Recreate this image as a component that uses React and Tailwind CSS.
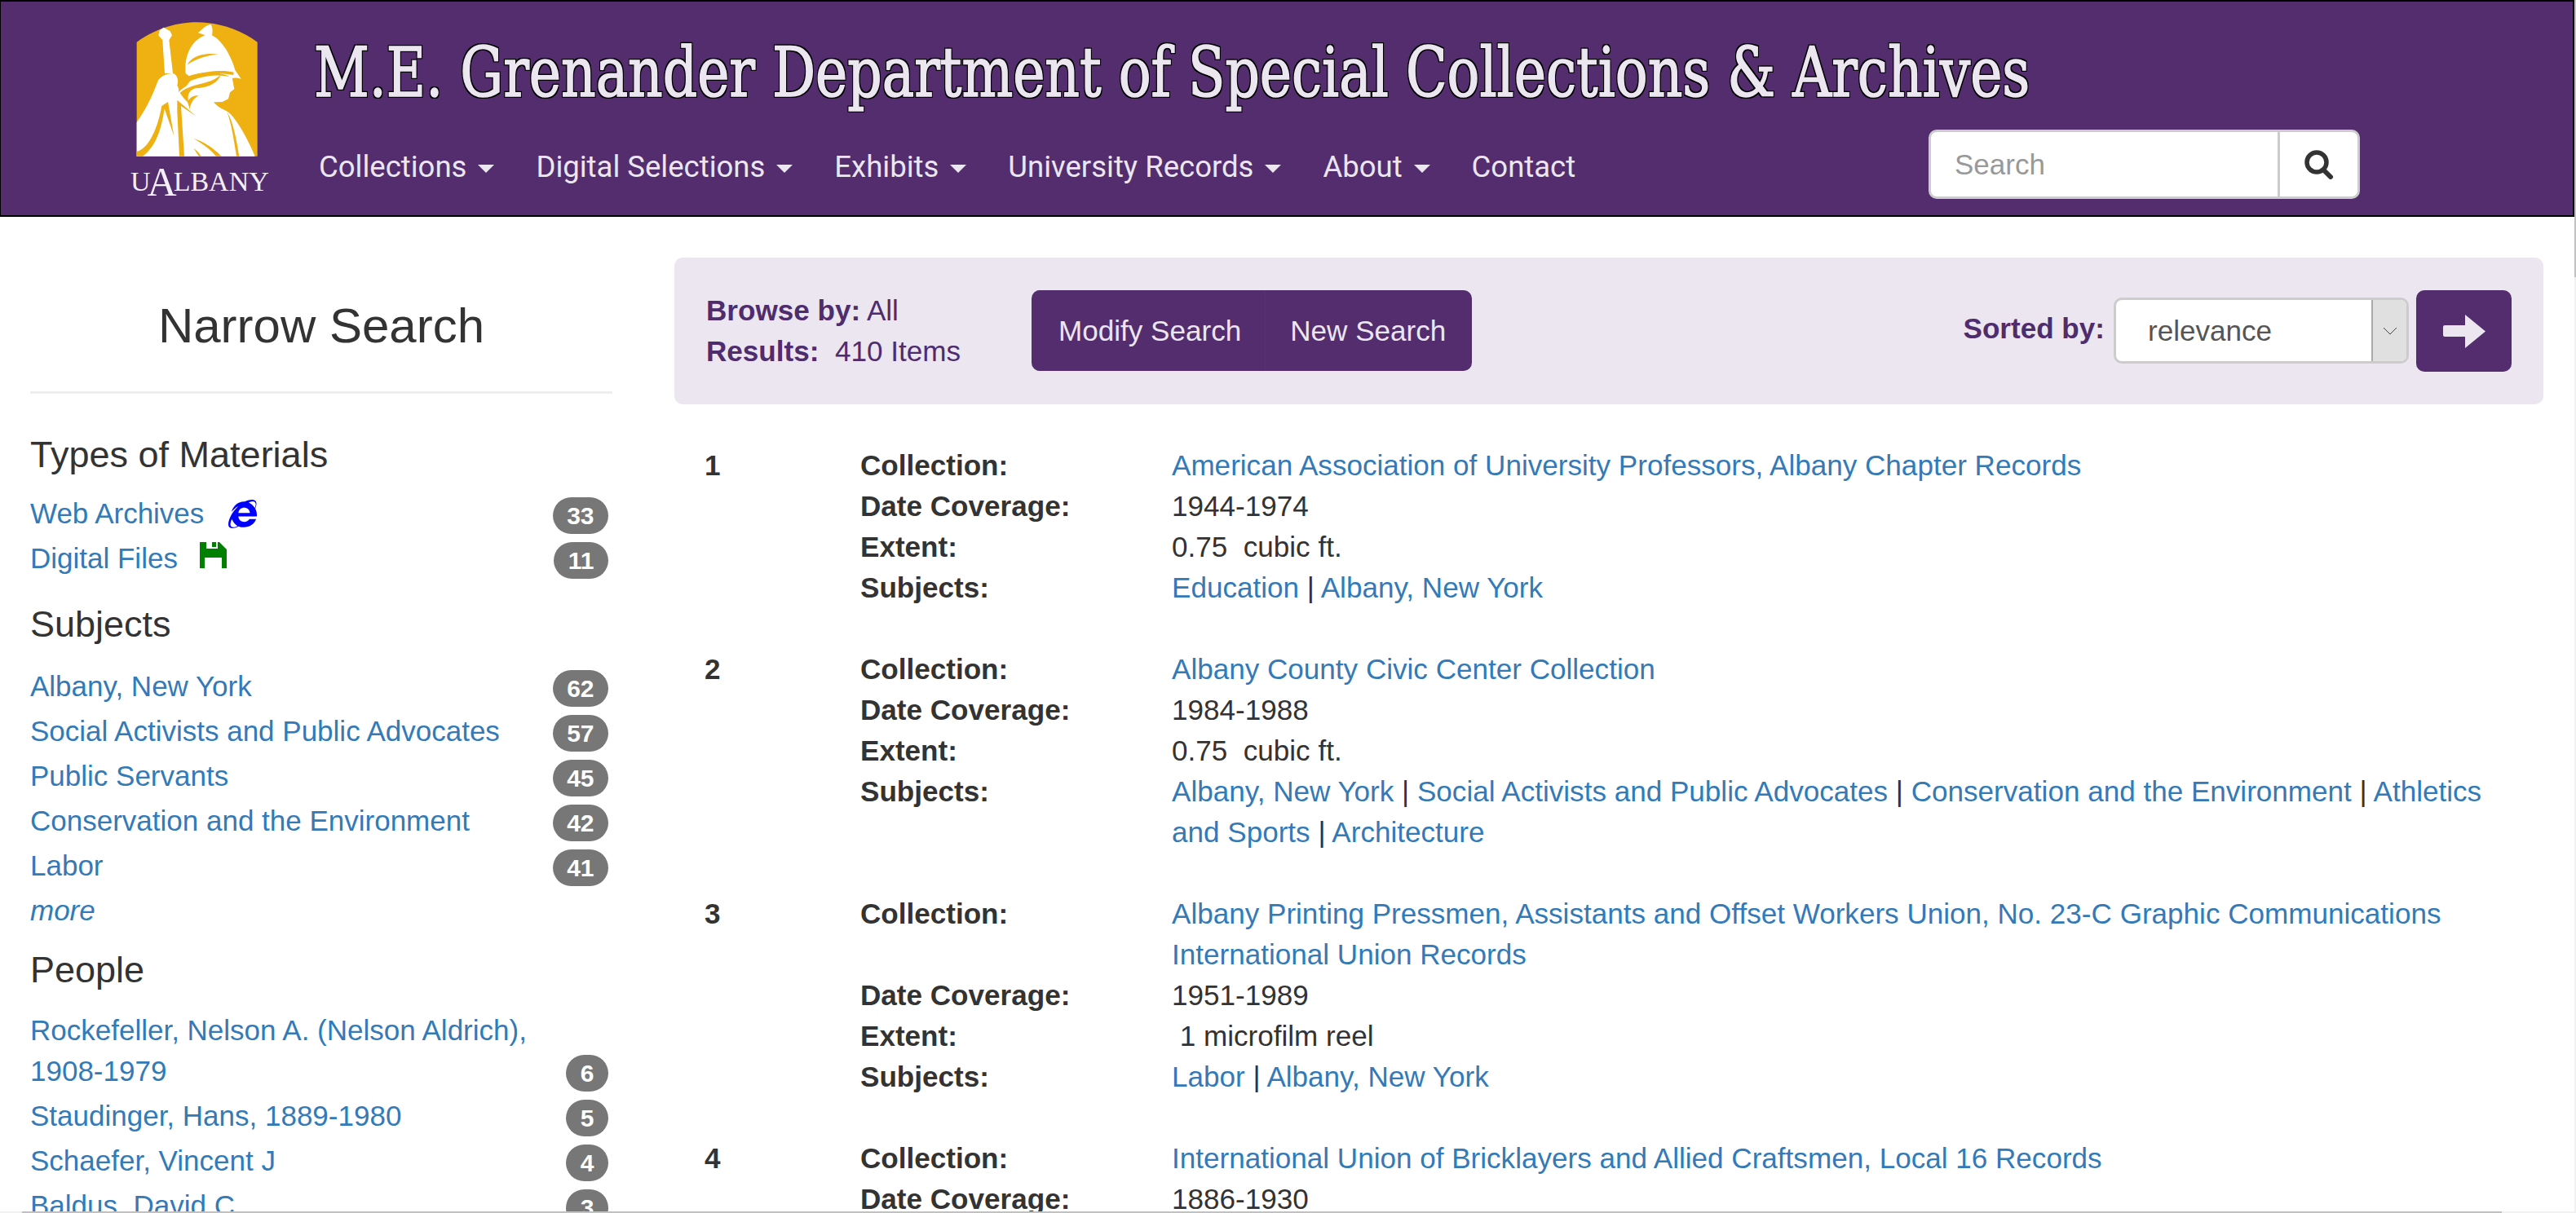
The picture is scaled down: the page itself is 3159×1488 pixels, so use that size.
import React from "react";
import { FaInternetExplorer } from "react-icons/fa";

const Sans = "[font-family:'Liberation_Sans',Arial,sans-serif]";

function Logo() {
  return (
    <svg viewBox="0 0 660 555" className="block w-[220px] h-[185px]">
      <path d="M113 125 C190 70 270 52 335 52 C410 52 490 75 557 125 L557 545 L113 545 Z" fill="#efb111" />
      <g fill="#fff">
        {/* spear */}
        <path d="M212 71 L197 82 L193 100 L208 118 L216 240 L246 240 L232 118 L243 100 L236 85 Z" />
        {/* arm, hand and cloak */}
        <path d="M113 420 C145 375 170 325 190 270 C198 252 222 240 246 240 C262 245 268 262 262 285 C272 300 268 318 258 325 C268 300 295 285 330 270 L395 348 C420 370 445 378 448 382 C470 395 515 465 548 545 L113 545 Z" />
        {/* helmet */}
        <path d="M293 240 C286 170 320 115 365 100 L338 90 C350 85 362 64 385 60 C394 70 392 88 390 100 C430 120 462 180 475 228 L497 260 C480 255 470 256 462 258 C430 232 350 232 305 250 Z" />
        {/* face and hair */}
        <path d="M310 268 C360 248 420 240 464 256 L472 298 L456 310 L450 334 L428 345 L396 346 L420 372 L330 400 L270 320 Z" />
      </g>
      <g fill="#efb111">
        <path d="M299 208 C318 176 360 163 412 170 C370 174 330 186 299 208 Z" />
        <path d="M308 252 C360 232 430 225 470 236 L468 246 C420 236 360 240 308 256 Z" />
        <path d="M272 312 C310 275 380 285 422 245 C410 280 370 292 330 295 C310 300 295 315 305 352 C290 335 280 325 272 312 Z" />
        <path d="M300 345 C310 325 325 320 342 322 C325 330 312 345 308 372 Z" />
        <path d="M262 338 L332 398 L276 360 L288 545 L270 545 L262 380 Z" />
        <path d="M228 345 L250 470 L215 370 C205 440 185 510 135 545 L113 545 L113 528 C160 515 190 440 205 360 Z" />
        <path d="M322 480 C360 490 400 520 425 545 L405 545 C385 520 350 495 322 480 Z" />
        <path d="M322 515 C335 525 345 535 350 545 L342 545 C335 535 328 525 322 515 Z" />
        <path d="M445 382 C465 410 480 480 490 545 L480 545 C470 480 460 420 445 382 Z" />
      </g>
    </svg>
  );
}

function Caret() {
  return <span className="inline-block ml-[14px] w-0 h-0 border-x-[10px] border-x-transparent border-t-[10px] border-t-[#ebe6f0] align-middle" />;
}

function NavItem({ label, caret = true }) {
  return (
    <span className="whitespace-nowrap">
      {label}
      {caret && <Caret />}
    </span>
  );
}

function Header() {
  return (
    <header className="h-[266px] shrink-0 bg-[#532d6d] border-2 border-l border-black flex">
      <div className="ml-[129px] w-[220px] pt-[8px] shrink-0">
        <Logo />
        <div className="mt-[8px] ml-[30px] flex items-center h-[40px] text-[#f3eff6] [font-family:'Liberation_Serif',serif] leading-none whitespace-nowrap">
          <span className="text-[34px]">U</span>
          <span className="text-[50px] -ml-[4px] -mr-[4px]">A</span>
          <span className="text-[34px]">LBANY</span>
        </div>
      </div>
      <div className="ml-[35px] flex-1 min-w-0">
        <h1 className="mt-[37px] h-[100px] leading-[100px] text-[85px] text-[#ebe6f0] whitespace-nowrap origin-left scale-x-[0.866] [font-family:'DejaVu_Serif',serif] [font-stretch:condensed] [-webkit-text-stroke:1.5px_#ebe6f0] [text-shadow:2px_2px_0_#000,-2px_2px_0_#000,2px_-2px_0_#000,-2px_-2px_0_#000]">
          M.E. Grenander Department of Special Collections &amp; Archives
        </h1>
        <div className="mt-[20px] flex items-start">
          <nav className="pl-[6px] pt-[21px] flex gap-[51px] text-[36.5px] leading-[50px] text-[#ebe6f0] [font-family:Roboto,sans-serif]">
            <NavItem label="Collections" />
            <NavItem label="Digital Selections" />
            <NavItem label="Exhibits" />
            <NavItem label="University Records" />
            <NavItem label="About" />
            <NavItem label="Contact" caret={false} />
          </nav>
          <div className="ml-auto mr-[261px] flex w-[529px] h-[85px] bg-white rounded-[10px] border-[3px] border-[#cccccc] overflow-hidden">
            <div className={`flex-1 pl-[29px] leading-[79px] text-[35px] text-[#999999] ${Sans}`}>Search</div>
            <div className="w-[98px] border-l-[3px] border-[#cccccc] flex items-center justify-center">
              <svg viewBox="0 0 36 36" className="w-[36px] h-[36px]">
                <circle cx="15" cy="15" r="12" fill="none" stroke="#333" strokeWidth="5.5" />
                <path d="M24 25 L32 33" stroke="#333" strokeWidth="6" strokeLinecap="round" />
              </svg>
            </div>
          </div>
        </div>
      </div>
    </header>
  );
}

function Badge({ n }) {
  return (
    <span className="shrink-0 ml-auto mr-[5px] h-[45px] px-[17.5px] rounded-[25px] bg-[#777777] text-white text-[30px] leading-[45px] font-bold">{n}</span>
  );
}

function Facet({ children, n, icon }) {
  return (
    <div className="flex items-end mb-[5px]">
      <a className="text-[#337ab7] text-[35px] leading-[50px] max-w-[640px]">{children}{icon}</a>
      <Badge n={n} />
    </div>
  );
}

function Disk() {
  return (
    <svg viewBox="0 0 33 32" className="inline-block w-[33px] h-[32px] ml-[27px] align-[0px]">
      <path d="M0 0 H24 L33 9 V32 H27 V19 H6 V32 H0 Z" fill="#008000" />
      <rect x="8" y="0" width="14" height="8" fill="#fff" />
      <rect x="15" y="0" width="5" height="6" fill="#008000" />
    </svg>
  );
}

function Sidebar() {
  return (
    <aside className={`w-[714px] ml-[37px] shrink-0 text-[#333333] ${Sans}`}>
      <h3 className="mt-[101px] h-[66px] leading-[66px] text-[60px] text-center">Narrow Search</h3>
      <div className="mt-[47px] h-[3px] bg-[#eeeeee]" />
      <h4 className="mt-[50px] mb-[22px] text-[45px] leading-[50px]">Types of Materials</h4>
      <Facet n={33} icon={<FaInternetExplorer className="inline-block w-[35px] h-[35px] ml-[30px] text-[#0000ff] align-[-6px]" />}>Web Archives</Facet>
      <Facet n={11} icon={<Disk />}>Digital Files</Facet>
      <h4 className="mt-[31px] mb-[26px] text-[45px] leading-[50px]">Subjects</h4>
      <Facet n={62}>Albany, New York</Facet>
      <Facet n={57}>Social Activists and Public Advocates</Facet>
      <Facet n={45}>Public Servants</Facet>
      <Facet n={42}>Conservation and the Environment</Facet>
      <Facet n={41}>Labor</Facet>
      <a className="block text-[#337ab7] italic text-[35px] leading-[50px]">more</a>
      <h4 className="mt-[23px] mb-[24px] text-[45px] leading-[50px]">People</h4>
      <Facet n={6}>Rockefeller, Nelson A. (Nelson Aldrich), 1908-1979</Facet>
      <Facet n={5}>Staudinger, Hans, 1889-1980</Facet>
      <Facet n={4}>Schaefer, Vincent J</Facet>
      <Facet n={3}>Baldus, David C</Facet>
    </aside>
  );
}

function SubjectLinks({ items }) {
  return items.map((s, i) => (
    <React.Fragment key={s}>
      {i > 0 && " | "}
      <a className="text-[#337ab7]">{s}</a>
    </React.Fragment>
  ));
}

function Row({ label, children }) {
  return (
    <div className="flex">
      <div className="w-[382px] shrink-0 font-bold">{label}</div>
      <div className="w-[1653px]">{children}</div>
    </div>
  );
}

function Result({ num, collection, date, extent, subjects }) {
  return (
    <div className="flex mb-[50px]">
      <div className="w-[191px] shrink-0 font-bold">{num}</div>
      <div>
        <Row label="Collection:"><a className="text-[#337ab7]">{collection}</a></Row>
        <Row label="Date Coverage:">{date}</Row>
        <Row label="Extent:"><span className="whitespace-pre">{extent}</span></Row>
        <Row label="Subjects:"><SubjectLinks items={subjects} /></Row>
      </div>
    </div>
  );
}

function Toolbar() {
  return (
    <div className="h-[180px] bg-[#ebe6f0] rounded-[10px] flex items-start">
      <div className="ml-[39px] mt-[40px] w-[399px] shrink-0 text-[#4f2c6e]">
        <div><b>Browse by:</b> All</div>
        <div className="whitespace-pre"><b>Results:</b>  410 Items</div>
      </div>
      <div className="mt-[40px] h-[99px] rounded-[10px] bg-[#532d6d] text-[#ebe6f0] flex items-center">
        <span className="pl-[33px] pr-[29px] leading-[99px] border-r border-[#4a3a6a]">Modify Search</span>
        <span className="pl-[30px] pr-[32px] leading-[99px]">New Search</span>
      </div>
      <div className="ml-auto mr-[39px] mt-[40px] flex items-start">
        <b className="text-[#4f2c6e] mt-[22px]">Sorted by:</b>
        <div className="ml-[11px] mt-[9px] w-[362px] h-[81px] rounded-[10px] border-[3px] border-[#cccccc] bg-white flex overflow-hidden">
          <span className="pl-[39px] flex-1 leading-[75px] text-[#555555]">relevance</span>
          <span className="w-[43px] bg-[#e0e0e0] border-l-2 border-[#aaaaaa] flex items-center justify-center">
            <svg viewBox="0 0 18 10" className="w-[18px] h-[10px]"><path d="M1 1 L9 9 L17 1" fill="none" stroke="#444" strokeWidth="1" /></svg>
          </span>
        </div>
        <div className="ml-[9px] w-[117px] h-[100px] rounded-[10px] bg-[#532d6d] flex items-center justify-center">
          <svg viewBox="0 0 52 41" className="w-[52px] h-[41px]">
            <path d="M2 13 H27 V0 L52 20.5 L27 41 V27 H2 Q0 27 0 25 V15 Q0 13 2 13 Z" fill="#ebe6f0" />
          </svg>
        </div>
      </div>
    </div>
  );
}

function Main() {
  return (
    <main className={`ml-[76px] flex-1 min-w-0 mr-[38px] mt-[50px] text-[35.1px] leading-[50px] text-[#333333] ${Sans}`}>
      <Toolbar />
      <div className="mt-[50px] ml-[37px]">
        <Result num="1" collection="American Association of University Professors, Albany Chapter Records" date="1944-1974" extent="0.75  cubic ft." subjects={["Education", "Albany, New York"]} />
        <Result num="2" collection="Albany County Civic Center Collection" date="1984-1988" extent="0.75  cubic ft." subjects={["Albany, New York", "Social Activists and Public Advocates", "Conservation and the Environment", "Athletics and Sports", "Architecture"]} />
        <Result num="3" collection="Albany Printing Pressmen, Assistants and Offset Workers Union, No. 23-C Graphic Communications International Union Records" date="1951-1989" extent=" 1 microfilm reel" subjects={["Labor", "Albany, New York"]} />
        <Result num="4" collection="International Union of Bricklayers and Allied Craftsmen, Local 16 Records" date="1886-1930" extent="" subjects={[]} />
      </div>
    </main>
  );
}

export default function App() {
  return (
    <div className="w-[3159px] h-[1488px] overflow-hidden bg-white flex">
      <div className="w-[3157px] h-full flex flex-col">
        <div className="flex-1 min-h-0 overflow-hidden">
          <Header />
          <div className="flex items-start">
            <Sidebar />
            <Main />
          </div>
        </div>
        <div className="h-[2px] shrink-0 bg-[#f1f1f1] pl-[27px]">
          <div className="w-[3041px] h-full bg-[#c1c1c1]" />
        </div>
      </div>
      <div className="w-[2px] h-full bg-[#f1f1f1]">
        <div className="h-[340px] bg-[#c1c1c1]" />
      </div>
    </div>
  );
}
